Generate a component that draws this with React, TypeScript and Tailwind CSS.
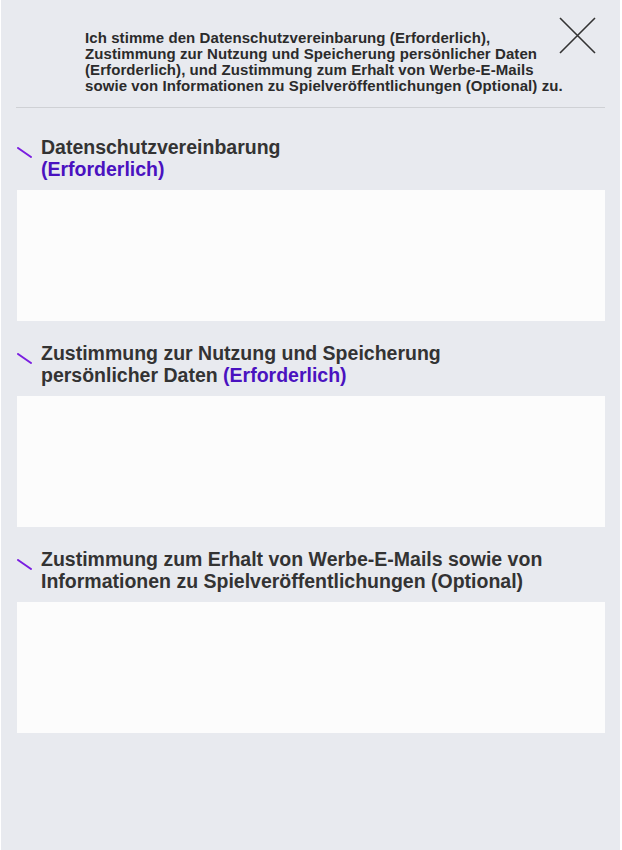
const sections = [
  { lines: <>Datenschutzvereinbarung<br /><span className="text-[#4a12c0]">(Erforderlich)</span></> },
  { lines: <>Zustimmung zur Nutzung und Speicherung<br />persönlicher Daten <span className="text-[#4a12c0]">(Erforderlich)</span></> },
  { lines: <>Zustimmung zum Erhalt von Werbe-E-Mails sowie von<br />Informationen zu Spielveröffentlichungen (Optional)</> },
]

export default function App() {
  return (
    <div className="h-[850px] w-[622px] bg-white font-['Liberation_Sans',Arial,sans-serif]">
      <div className="ml-[1px] flex h-full w-[619px] flex-col bg-[#e8eaef]">
        <div className="flex items-start justify-between pl-[84px] pr-[24px] pt-[16px]">
          <p className="mt-[14px] min-w-0 whitespace-nowrap text-[15px] font-bold leading-[16px] tracking-[0.08px] text-[#2b2b2b]">
            Ich stimme den Datenschutzvereinbarung (Erforderlich),
            <br />
            Zustimmung zur Nutzung und Speicherung persönlicher Daten
            <br />
            (Erforderlich), und Zustimmung zum Erhalt von Werbe-E-Mails
            <br />
            sowie von Informationen zu Spielveröffentlichungen (Optional) zu.
          </p>
          <svg width="37" height="37" viewBox="0 0 37 37" className="mt-[1px] shrink-0">
            <path d="M1 1L36 36M36 1L1 36" stroke="#333" strokeWidth="1.6" fill="none" />
          </svg>
        </div>
        <div className="mx-[15px] mt-[13px] h-px bg-[#cfd1d5]" />
        <div className="flex flex-col gap-[21px] pt-[28px]">
          {sections.map((s, i) => (
            <div key={i} className="flex flex-col">
              <div className="flex items-start">
                <svg width="16" height="12" viewBox="0 0 16 12" className="ml-[16px] mt-[11px] shrink-0">
                  <path d="M1 1L14 10" stroke="#7a1ee0" strokeWidth="2" strokeLinecap="round" />
                </svg>
                <h2 className="ml-[8px] text-[19.5px] font-bold leading-[22px] text-[#333]">{s.lines}</h2>
              </div>
              <div className="ml-[16px] mt-[10px] h-[131px] w-[588px] bg-[#fcfcfc]" />
            </div>
          ))}
        </div>
      </div>
    </div>
  )
}
